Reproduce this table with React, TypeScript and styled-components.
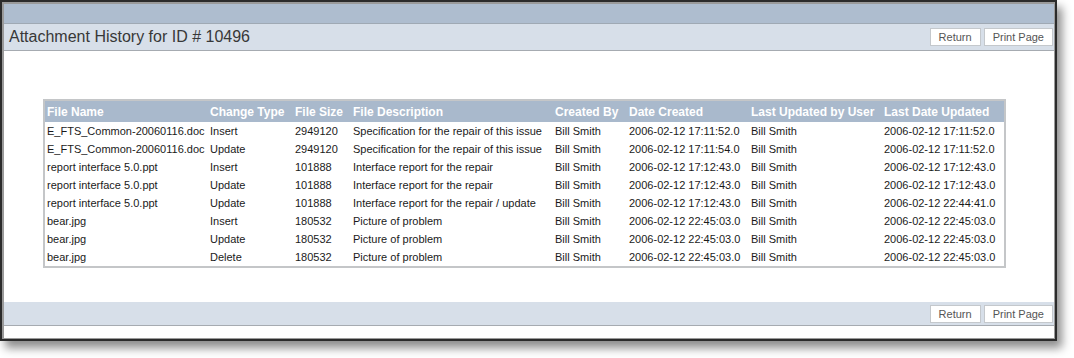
import React from "react";
import styled, { createGlobalStyle } from "styled-components";

const Global = createGlobalStyle`
  html, body { margin: 0; padding: 0; background: #ffffff; }
  body { font-family: "Liberation Sans", Arial, sans-serif; }
`;

const Stage = styled.div`
  width: 1074px;
  height: 358px;
  background: #ffffff;
  overflow: hidden;
`;

const Frame = styled.div`
  width: 1057px;
  height: 341px;
  box-sizing: border-box;
  border: 2px solid #2b2b2b;
  background: #ffffff;
  box-shadow: 5px 7px 9px rgba(0, 0, 0, 0.45);
  display: flex;
  flex-direction: column;
`;

const Inner = styled.div`
  flex: 1;
  border: 2px solid #9a9a9a;
  border-right-width: 1px;
  border-bottom-width: 1px;
  display: flex;
  flex-direction: column;
  background: #ffffff;
`;

const TopBar = styled.div`
  height: 19px;
  background: #aebdcf;
  border-bottom: 1px solid #9fa9b4;
`;

const Bar = styled.div<{ $h: number }>`
  height: ${(p) => p.$h}px;
  background: #d7dfe9;
  border-bottom: 1px solid #a6abb1;
  display: flex;
  align-items: center;
  justify-content: space-between;
  padding: 0 1px 0 5px;
`;

const Title = styled.h1`
  margin: 0;
  font-size: 16px;
  font-weight: normal;
  color: #383838;
  font-family: "Liberation Sans", Arial, sans-serif;
`;

const Buttons = styled.div`
  display: flex;
  gap: 3px;
  margin-left: auto;
`;

const Btn = styled.button`
  height: 18px;
  padding: 0 8px;
  background: #ffffff;
  border: 1px solid #c4c8cc;
  color: #555;
  font-family: "Liberation Sans", Arial, sans-serif;
  font-size: 11px;
  line-height: 16px;
`;

const Content = styled.div`
  flex: 1;
  padding: 48px 0 0 39px;
`;

const Table = styled.table`
  border-collapse: collapse;
  width: 961px;
  table-layout: fixed;
  border: 2px solid #c4c6c8;
  font-size: 11px;
  color: #1a1a1a;
`;

const Th = styled.th`
  box-sizing: border-box;
  background: #a9b9cc;
  color: #ffffff;
  font-weight: bold;
  font-size: 12px;
  text-align: left;
  height: 22px;
  padding: 0 2px;
  white-space: nowrap;
  overflow: hidden;
`;

const Td = styled.td`
  height: 18px;
  padding: 0 2px;
  white-space: nowrap;
  overflow: hidden;
`;

const Footer = styled.div`
  height: 12px;
`;

const cols: [string, number][] = [
  ["File Name", 164],
  ["Change Type", 85],
  ["File Size", 58],
  ["File Description", 202],
  ["Created By", 74],
  ["Date Created", 122],
  ["Last Updated by User", 133],
  ["Last Date Updated", 123],
];

const rows: string[][] = [
  ["E_FTS_Common-20060116.doc", "Insert", "2949120", "Specification for the repair of this issue", "Bill Smith", "2006-02-12 17:11:52.0", "Bill Smith", "2006-02-12 17:11:52.0"],
  ["E_FTS_Common-20060116.doc", "Update", "2949120", "Specification for the repair of this issue", "Bill Smith", "2006-02-12 17:11:54.0", "Bill Smith", "2006-02-12 17:11:52.0"],
  ["report interface 5.0.ppt", "Insert", "101888", "Interface report for the repair", "Bill Smith", "2006-02-12 17:12:43.0", "Bill Smith", "2006-02-12 17:12:43.0"],
  ["report interface 5.0.ppt", "Update", "101888", "Interface report for the repair", "Bill Smith", "2006-02-12 17:12:43.0", "Bill Smith", "2006-02-12 17:12:43.0"],
  ["report interface 5.0.ppt", "Update", "101888", "Interface report for the repair / update", "Bill Smith", "2006-02-12 17:12:43.0", "Bill Smith", "2006-02-12 22:44:41.0"],
  ["bear.jpg", "Insert", "180532", "Picture of problem", "Bill Smith", "2006-02-12 22:45:03.0", "Bill Smith", "2006-02-12 22:45:03.0"],
  ["bear.jpg", "Update", "180532", "Picture of problem", "Bill Smith", "2006-02-12 22:45:03.0", "Bill Smith", "2006-02-12 22:45:03.0"],
  ["bear.jpg", "Delete", "180532", "Picture of problem", "Bill Smith", "2006-02-12 22:45:03.0", "Bill Smith", "2006-02-12 22:45:03.0"],
];

const Actions = () => (
  <Buttons>
    <Btn>Return</Btn>
    <Btn>Print Page</Btn>
  </Buttons>
);

export default function App() {
  return (
    <Stage>
      <Global />
      <Frame>
        <Inner>
          <TopBar />
          <Bar $h={26}>
            <Title>Attachment History for ID # 10496</Title>
            <Actions />
          </Bar>
          <Content>
            <Table>
              <colgroup>
                {cols.map(([c, w]) => (
                  <col key={c} style={{ width: w }} />
                ))}
              </colgroup>
              <thead>
                <tr>
                  {cols.map(([c]) => (
                    <Th key={c}>{c}</Th>
                  ))}
                </tr>
              </thead>
              <tbody>
                {rows.map((r, i) => (
                  <tr key={i}>
                    {r.map((v, j) => (
                      <Td key={j}>{v}</Td>
                    ))}
                  </tr>
                ))}
              </tbody>
            </Table>
          </Content>
          <Bar $h={23}>
            <Actions />
          </Bar>
          <Footer />
        </Inner>
      </Frame>
    </Stage>
  );
}
